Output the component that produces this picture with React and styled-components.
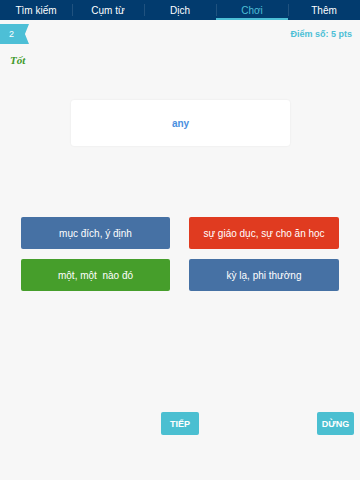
import React from 'react'
import styled, { createGlobalStyle } from 'styled-components'

const Global = createGlobalStyle`
    html, body {
        margin: 0;
        padding: 0;
        background: #f7f7f7;
    }
    body {
        font-family: "Liberation Sans", Arial, sans-serif;
    }
`

const Page = styled.div`
    width: 360px;
    height: 480px;
    display: flex;
    flex-direction: column;
    background: #f7f7f7;
    overflow: hidden;
`

const Nav = styled.nav`
    height: 20px;
    display: flex;
    background: #023b6e;
    flex-shrink: 0;
`

const Tab = styled.div`
    flex: 1;
    display: flex;
    align-items: center;
    justify-content: center;
    position: relative;
    font-size: 10px;
    color: ${p => (p.active ? '#4dbfd6' : '#ffffff')};
    box-shadow: ${p => (p.active ? 'inset 0 -2px 0 #4dbfd6' : 'none')};
    &:not(:first-child)::before {
        content: '';
        position: absolute;
        left: 0;
        top: 4px;
        bottom: 4px;
        width: 1px;
        background: rgba(255, 255, 255, 0.12);
    }
`

const TopRow = styled.div`
    display: flex;
    align-items: center;
    justify-content: space-between;
    margin-top: 4px;
    height: 20px;
    padding-right: 8px;
`

const Ribbon = styled.div`
    width: 29px;
    height: 20px;
    background: #4dbfd6;
    color: #fff;
    font-size: 9px;
    display: flex;
    align-items: center;
    padding-left: 9px;
    box-sizing: border-box;
    clip-path: polygon(0 0, 100% 0, 86% 50%, 100% 100%, 0 100%);
`

const Score = styled.div`
    font-size: 9px;
    font-weight: bold;
    color: #4dbfd6;
`

const Verdict = styled.div`
    margin: 10px 0 0 10px;
    font-family: "Liberation Serif", "DejaVu Serif", serif;
    font-style: italic;
    font-weight: bold;
    font-size: 11px;
    color: #3f9a2a;
`

const Card = styled.div`
    margin: 34px 0 0 71px;
    width: 219px;
    height: 46px;
    background: #fff;
    border-radius: 3px;
    box-shadow: 0 0 2px rgba(0, 0, 0, 0.08);
    display: flex;
    align-items: center;
    justify-content: center;
    font-size: 10px;
    font-weight: bold;
    color: #4a8fe0;
`

const Choices = styled.div`
    margin: 71px 0 0 21px;
    display: grid;
    grid-template-columns: 149px 150px;
    column-gap: 19px;
    row-gap: 10px;
`

const Choice = styled.button`
    height: 32px;
    border: none;
    border-radius: 2px;
    background: ${p => p.color};
    color: #fff;
    font-family: "Liberation Sans", Arial, sans-serif;
    font-size: 10px;
    padding: 0;
    white-space: pre;
`

const Actions = styled.div`
    margin-top: 121px;
    display: flex;
    justify-content: space-between;
    padding-left: 161px;
    padding-right: 6px;
`

const ActionButton = styled.button`
    height: 23px;
    width: ${p => p.w}px;
    border: none;
    border-radius: 2px;
    background: #4bbfd1;
    color: #fff;
    font-family: "Liberation Sans", Arial, sans-serif;
    font-weight: bold;
    font-size: 9px;
    padding: 0;
`

const tabs = ['Tìm kiếm', 'Cụm từ', 'Dịch', 'Chơi', 'Thêm']

const choices = [
    { text: 'mục đích, ý định', color: '#4671a4' },
    { text: 'sự giáo dục, sự cho ăn học', color: '#e03b20' },
    { text: 'một, một  nào đó', color: '#469e2b' },
    { text: 'kỳ lạ, phi thường', color: '#4671a4' },
]

const App = () =>
    <Page>
        <Global />
        <Nav>
            {tabs.map(t => <Tab key={t} active={t === 'Chơi'}>{t}</Tab>)}
        </Nav>
        <TopRow>
            <Ribbon>2</Ribbon>
            <Score>Điểm số: 5 pts</Score>
        </TopRow>
        <Verdict>Tốt</Verdict>
        <Card>any</Card>
        <Choices>
            {choices.map(c => <Choice key={c.text} color={c.color}>{c.text}</Choice>)}
        </Choices>
        <Actions>
            <ActionButton w={38}>TIẾP</ActionButton>
            <ActionButton w={37}>DỪNG</ActionButton>
        </Actions>
    </Page>

export default App
